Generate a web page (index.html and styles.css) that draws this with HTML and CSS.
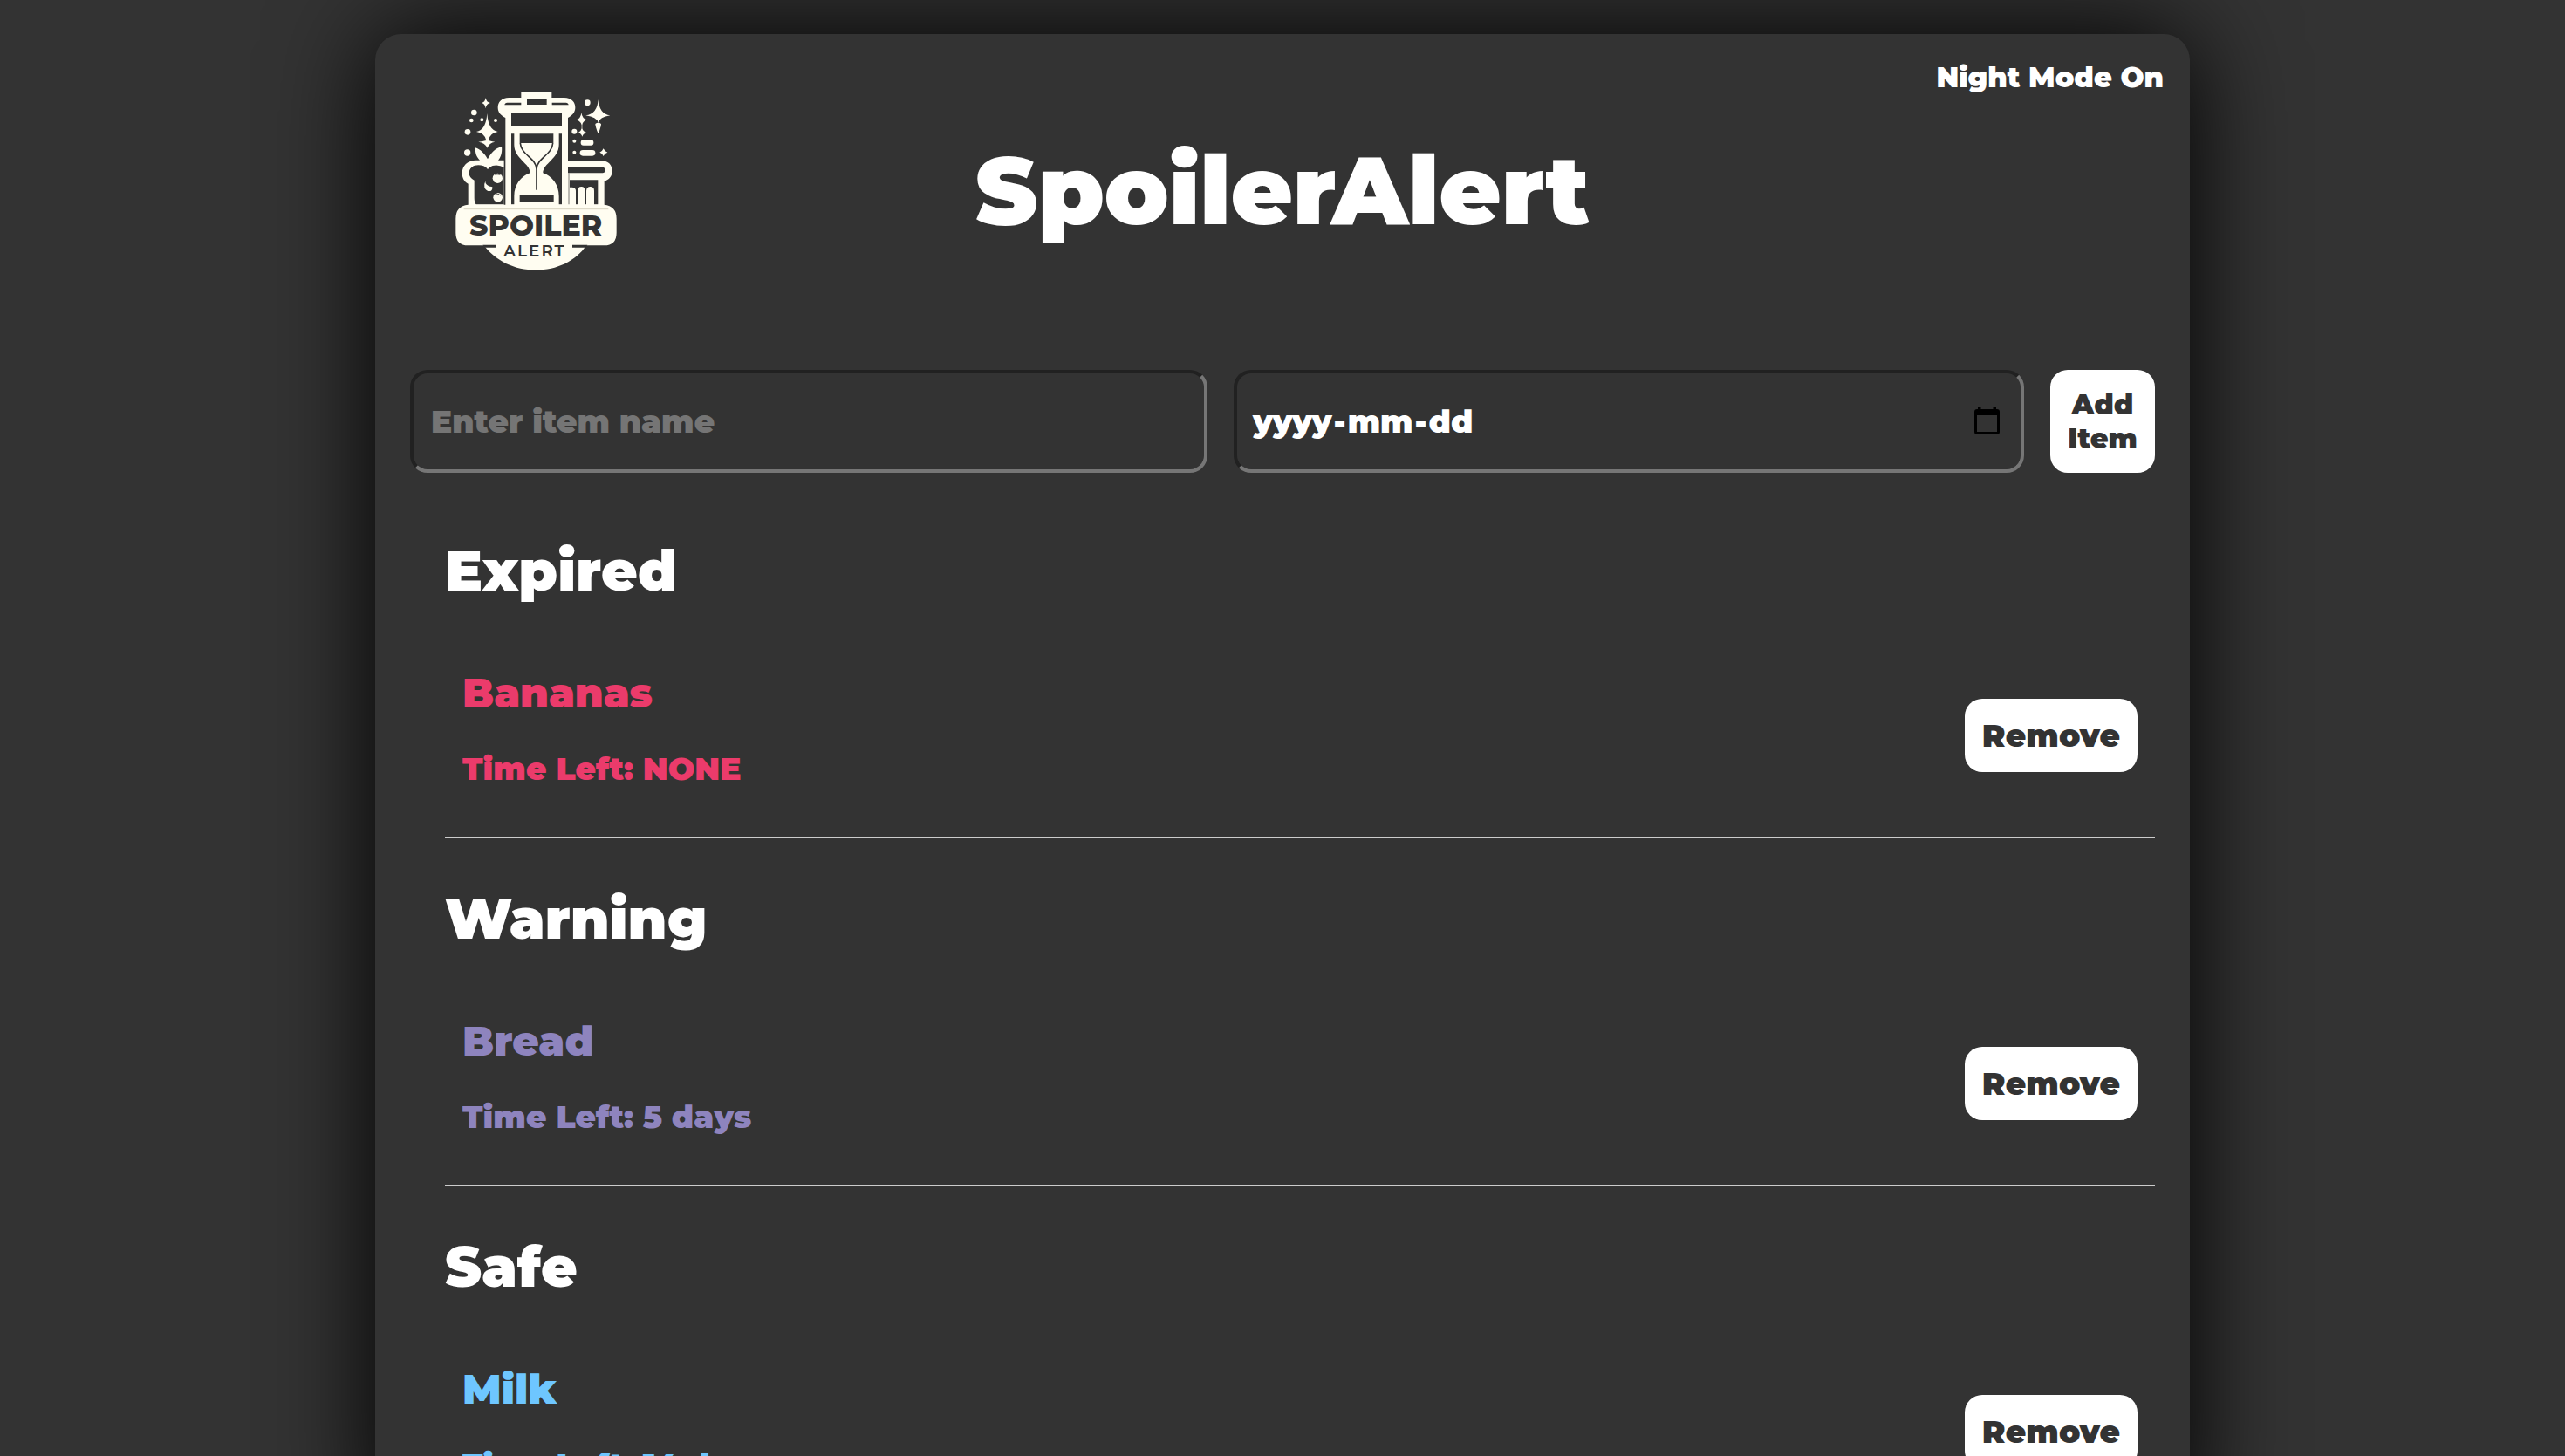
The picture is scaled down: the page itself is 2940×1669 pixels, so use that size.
FILE: index.html
```
<!DOCTYPE html>
<html lang="en">
<head>
<meta charset="utf-8">
<title>SpoilerAlert</title>
<link rel="stylesheet" href="styles.css">
</head>
<body>
<main class="card">
  <header class="header">
    <svg class="logo" viewBox="0 0 690 690" role="img" aria-label="Spoiler Alert logo">
      <!-- bin lid and frame -->
      <path class="cream" d="M292 66V48H397V66H440C466 66 478 82 478 100C478 116 468 128 453 135V440H238V135C222 128 212 116 212 100C212 82 224 66 250 66Z"/>
      <path class="dark" d="M312 70H380V90H312ZM244 83H292V91H235Q236 83 244 83ZM398 83H446Q454 83 455 91H398ZM258 120H432V165H258ZM258 190H432V433H258Z"/>
      <!-- hourglass -->
      <path class="cream" d="M268 185H422V228C422 275 367 292 367 325C398 335 422 365 422 405V436H268V405C268 365 292 335 323 325C323 292 268 275 268 228Z"/>
      <path class="dark" d="M287 190H403V222H287Z"/>
      <path class="line" d="M289 222C291 262 345 275 345 312C345 275 399 262 401 222M345 300V383"/>
      <path class="dark" d="M287 400H404V423H287Z"/>
      <!-- bread and fruit -->
      <path class="cream" d="M233 281H213C225 268 227 248 225 234C203 240 188 256 177 277C166 258 153 244 134 238C134 258 139 271 150 281H137C107 281 89 300 89 326C89 342 97 355 110 362V440H233Z"/>
      <path class="dark" d="M113 325C113 302 138 292 163 301Q172 304 177 312Q185 303 194 300Q215 295 233 306V433H137Q131 428 131 410V350Q113 342 113 325Z"/>
      <circle class="cream" cx="211" cy="343" r="17"/>
      <circle class="cream" cx="212" cy="409" r="16"/>
      <path class="dark" d="M199 333Q211 322 223 334Q211 328 199 333ZM199 397Q212 389 223 404Q210 395 199 397Z"/>
      <path class="cream" d="M169 353Q164 362 166 374Q172 389 187 387Q194 384 193 373Q180 372 174 365Q168 359 169 353Z"/>
      <!-- container -->
      <path class="cream" d="M450 283H570C592 283 605 298 605 318C605 336 594 349 578 353V440H450Z"/>
      <path class="dark" d="M453 305H573Q582 307 582 315T573 325H453ZM459 349H556V433H543V386Q543 372 530 372T516 386V433H512V386Q512 372 499 372T486 386V433H480V386Q480 375 468 374L459 374Z"/>
      <path class="thin" d="M456 325V433"/>
      <!-- sparkles -->
      <path class="cream" d="M170 66Q172 82 186 84Q172 87 170 103Q168 87 156 84Q168 82 170 66ZM175 120Q179 178 212 183Q183 188 180 213Q190 217 202 218Q182 221 176 239Q168 221 145 218Q160 217 172 213Q168 188 138 183Q171 178 175 120ZM557 72Q560 122 598 127Q562 132 557 152Q552 132 514 127Q554 122 557 72ZM547 156Q557 148 567 156Q567 166 557 190Q547 166 547 156ZM499 118Q502 139 519 142Q504 146 502 160V172Q505 183 517 186Q505 189 502 200Q499 189 489 186Q497 183 500 172V160Q496 146 481 142Q497 139 499 118ZM575 241Q579 251 589 254Q579 257 575 267Q571 257 562 254Q571 251 575 241Z"/>
      <g class="cream">
        <circle cx="130" cy="117" r="10"/><circle cx="121" cy="144" r="7"/><circle cx="157" cy="142" r="6"/><circle cx="204" cy="144" r="6"/>
        <circle cx="108" cy="184" r="10"/><circle cx="107" cy="255" r="11"/><circle cx="520" cy="83" r="10"/><circle cx="475" cy="182" r="9"/>
        <circle cx="475" cy="215" r="6"/><circle cx="475" cy="254" r="6"/>
        <rect x="497" y="211" width="44" height="19" rx="9"/><rect x="494" y="246" width="53" height="20" rx="10"/>
      </g>
      <!-- name plate -->
      <path class="cream" d="M110 434H577Q620 438 620 482V530Q620 574 577 574H516C480 628 415 659 342 659C270 659 205 628 164 574H110Q67 574 67 530V482Q67 438 110 434Z"/>
      <path class="dark" d="M160 572H204V581H168ZM468 572H520L514 581H468Z"/>
      <path class="seam" d="M95 449H592"/>
      <text class="name" x="114" y="539" textLength="457" lengthAdjust="spacingAndGlyphs">SPOILER</text>
      <text class="sub" x="232" y="612" textLength="208">ALERT</text>
    </svg>
    <h1 class="title">SpoilerAlert</h1>
    <button class="mode" type="button">Night Mode On</button>
  </header>

  <form class="form">
    <input class="field field-name" type="text" placeholder="Enter item name">
    <div class="field field-date">
      <span class="date"><span>yyyy</span><span>-</span><span>mm</span><span>-</span><span>dd</span></span>
      <svg class="calendar" viewBox="0 0 29 32"><path fill-rule="evenodd" d="M4 0H7.500V3H21.500V0H25V3H26Q29 3 29 6V29Q29 32 26 32H3Q0 32 0 29V6Q0 3 3 3H4ZM3 10V29H26V10Z"/></svg>
    </div>
    <button class="button add" type="button">Add Item</button>
  </form>

  <div class="lists">
    <section class="group">
      <h2 class="heading">Expired</h2>
      <div class="item expired">
        <div class="info"><h3 class="item-name">Bananas</h3><p class="time">Time Left: NONE</p></div>
        <button class="button remove" type="button">Remove</button>
      </div>
    </section>
    <section class="group">
      <h2 class="heading">Warning</h2>
      <div class="item warning">
        <div class="info"><h3 class="item-name">Bread</h3><p class="time">Time Left: 5 days</p></div>
        <button class="button remove" type="button">Remove</button>
      </div>
    </section>
    <section class="group">
      <h2 class="heading">Safe</h2>
      <div class="item safe">
        <div class="info"><h3 class="item-name">Milk</h3><p class="time">Time Left: 14 days</p></div>
        <button class="button remove" type="button">Remove</button>
      </div>
    </section>
  </div>
</main>
</body>
</html>
```
FILE: styles.css
```
* { box-sizing: border-box; margin: 0; }

body {
  height: 100vh;
  overflow: hidden;
  padding-top: 39px;
  background: #333;
  color: #fff;
  font-family: Montserrat, Inter, sans-serif;
  font-weight: 900;
}

button, input { font: inherit; }

.card {
  width: 2080px;
  margin: 0 auto;
  border-radius: 30px;
  background: #333;
  box-shadow: 0 0 120px #000;
}

.header {
  display: grid;
  grid-template-columns: 1fr auto 1fr;
  align-items: start;
  height: 385px;
  padding: 30px 30px 0;
}

.logo { width: 230px; height: 230px; margin: 21px 0 0 40px; }
.cream { fill: #fffdf1; }
.dark { fill: #333; }
.line { fill: none; stroke: #333; stroke-width: 5; }
.thin { fill: none; stroke: #333; stroke-width: 2; }
.seam { stroke: #d8d3c0; stroke-width: 3; }
.name { fill: #333; font-size: 96px; font-weight: 800; }
.sub { fill: #333; font-size: 55px; font-weight: 600; }

.title { margin-top: 82px; font-size: 109px; line-height: 133px; font-weight: 900; }

.mode {
  justify-self: end;
  padding: 0;
  border: 0;
  background: none;
  color: #fff;
  font-size: 32px;
  line-height: 39px;
}

.form { display: flex; gap: 30px; padding: 0 40px; }

.field {
  height: 118px;
  min-width: 0;
  padding: 0 20px;
  border: 4px solid;
  border-color: #212121 #767676 #767676 #212121;
  border-radius: 20px;
  background: #333;
  color: #fff;
  font-size: 36px;
}
.field-name { flex: 0 0 914px; }
.field-name::placeholder { color: #757575; opacity: 1; }
.field-date { display: flex; flex: 1; align-items: center; justify-content: space-between; padding-left: 18px; }
.date { display: flex; gap: 2px; }
.calendar { width: 29px; height: 32px; margin: -2px 4px 0 0; }

.button {
  padding: 20px;
  border: 0;
  border-radius: 20px;
  background: #fff;
  color: #333;
}
.add { width: 120px; font-size: 32px; line-height: 39px; }
.remove { font-size: 36px; line-height: 44px; }

.lists { padding: 20px 40px 0 80px; }
.group { padding-top: 53px; }
.heading { font-size: 64px; line-height: 78px; font-weight: 900; }

.item {
  display: flex;
  align-items: center;
  justify-content: space-between;
  height: 234px;
  margin-top: 34px;
  padding: 0 20px;
  border-bottom: 2px solid #ccc;
}
.info { padding: 39px 0 56px; }
.item-name { font-size: 46.8px; line-height: 57px; font-weight: 900; }
.time { margin-top: 36px; font-size: 36px; line-height: 44px; }
.expired { color: #eb3b6b; }
.warning { color: #8e84be; }
.safe { color: #6ec6ff; }
```
